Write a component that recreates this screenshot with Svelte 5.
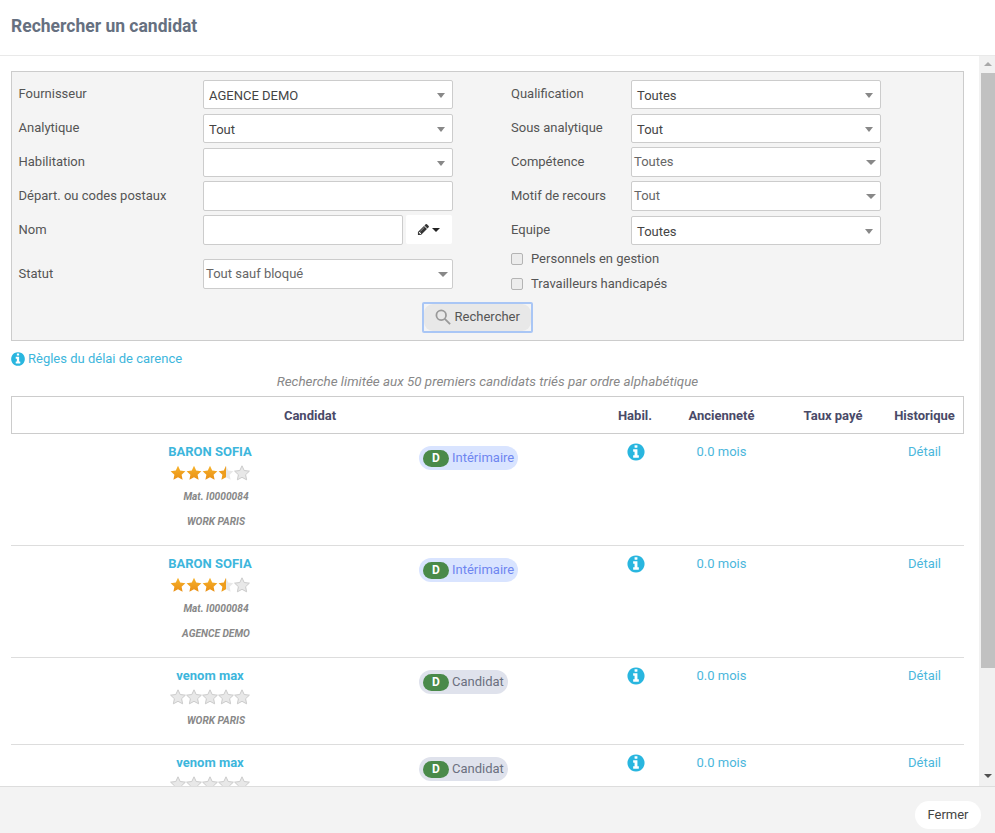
<script>
  const leftRows = [
    { label: 'Fournisseur', value: 'AGENCE DEMO', kind: 'a' },
    { label: 'Analytique', value: 'Tout', kind: 'a' },
    { label: 'Habilitation', value: '', kind: 'a' },
    { label: 'Départ. ou codes postaux', kind: 'input' },
    { label: 'Nom', kind: 'nom' },
    { label: 'Statut', value: 'Tout sauf bloqué', kind: 'b' }
  ];
  const rightRows = [
    { label: 'Qualification', value: 'Toutes', kind: 'a' },
    { label: 'Sous analytique', value: 'Tout', kind: 'a' },
    { label: 'Compétence', value: 'Toutes', kind: 'b' },
    { label: 'Motif de recours', value: 'Tout', kind: 'b' },
    { label: 'Equipe', value: 'Toutes', kind: 'a' }
  ];
  const candidates = [
    { name: 'BARON SOFIA', stars: 3.5, mat: 'Mat. I0000084', org: 'WORK PARIS', type: 'Intérimaire' },
    { name: 'BARON SOFIA', stars: 3.5, mat: 'Mat. I0000084', org: 'AGENCE DEMO', type: 'Intérimaire' },
    { name: 'venom max', stars: 0, org: 'WORK PARIS', type: 'Candidat' },
    { name: 'venom max', stars: 0, type: 'Candidat' }
  ];
  const starPath = 'M8 .8l2.2 4.7 5.2.65-3.8 3.55 1 5.1L8 12.3l-4.6 2.5 1-5.1L.6 6.15l5.2-.65z';
  const infoPath = 'M1152 1376v-160q0-14-9-23t-23-9h-96v-512q0-14-9-23t-23-9h-320q-14 0-23 9t-9 23v160q0 14 9 23t23 9h96v320h-96q-14 0-23 9t-9 23v160q0 14 9 23t23 9h448q14 0 23-9t9-23zm-128-896v-160q0-14-9-23t-23-9h-192q-14 0-23 9t-9 23v160q0 14 9 23t23 9h192q14 0 23-9t9-23zm640 416q0 209-103 385.5t-279.5 279.5-385.5 103-385.5-103-279.5-279.5-103-385.5 103-385.5 279.5-279.5 385.5-103 385.5 103 279.5 279.5 103 385.5z';
  const pencilPath = 'M491 1536l91-91-235-235-91 91v107h128v128h107zm523-928q0-22-22-22-10 0-17 7l-542 542q-7 7-7 17 0 22 22 22 10 0 17-7l542-542q7-7 7-17zm-54-192l416 416-832 832h-416v-416zm683 96q0 53-37 90l-166 166-416-416 166-165q36-38 90-38 53 0 91 38l235 234q37 39 37 91z';
  function starFill(i, n) {
    if (n >= i + 1) return 'url(#starFull)';
    if (n > i) return 'url(#starHalf)';
    return '#e8e8e8';
  }
  function starStroke(i, n) {
    return n >= i + 0.5 ? 'none' : '#cbcbcb';
  }
</script>

<svg class="defs" width="0" height="0" aria-hidden="true">
  <defs>
    <linearGradient id="starFull" x1="0" y1="0" x2="0" y2="1">
      <stop offset="0" stop-color="#f7b32b" />
      <stop offset="1" stop-color="#e98f14" />
    </linearGradient>
    <linearGradient id="starHalf" x1="0" y1="0" x2="1" y2="0">
      <stop offset="0.5" stop-color="#ee9d1c" />
      <stop offset="0.5" stop-color="#e8e8e8" />
    </linearGradient>
  </defs>
</svg>

{#snippet field(row)}
  <div class="label">{row.label}</div>
  {#if row.kind === 'input'}
    <div class="control input"></div>
  {:else if row.kind === 'nom'}
    <div class="nom">
      <div class="control input nom-input"></div>
      <div class="pencil-btn">
        <svg class="pencil" viewBox="0 0 1792 1792"><path d={pencilPath} /></svg>
        <span class="mini-caret"></span>
      </div>
    </div>
  {:else}
    <div class="control select {row.kind}">
      <span>{row.value}</span>
      <span class="caret"></span>
    </div>
  {/if}
{/snippet}

<div class="modal">
  <header class="head"><h1>Rechercher un candidat</h1></header>
  <div class="body">
    <div class="scroll">
      <section class="filters">
        <div class="cols">
          <div class="col left">
            {#each leftRows as row}
              <div class="row r-{row.kind}">{@render field(row)}</div>
            {/each}
          </div>
          <div class="col right">
            {#each rightRows as row}
              <div class="row r-{row.kind}">{@render field(row)}</div>
            {/each}
            <label class="check first"><span class="box"></span>Personnels en gestion</label>
            <label class="check"><span class="box"></span>Travailleurs handicapés</label>
          </div>
        </div>
        <div class="search-wrap">
          <button class="search">
            <span class="search-in">
              <svg class="loupe" viewBox="0 0 18 18"><circle cx="7" cy="7" r="5.4" /><path d="M11 11l6 6" /></svg>
              Rechercher
            </span>
          </button>
        </div>
      </section>

      <a class="rules" href="#rules">
        <svg class="info small" viewBox="0 0 1792 1792"><path d={infoPath} /></svg>
        Règles du délai de carence
      </a>
      <p class="note">Recherche limitée aux 50 premiers candidats triés par ordre alphabétique</p>

      <div class="table">
        <div class="thead grid">
          <div class="span2">Candidat</div>
          <div>Habil.</div>
          <div>Ancienneté</div>
          <div>Taux payé</div>
          <div>Historique</div>
        </div>
        {#each candidates as c}
          <div class="trow grid">
            <div class="who">
              <div class="name">{c.name}</div>
              <div class="stars">
                {#each [0, 1, 2, 3, 4] as i}
                  <svg viewBox="0 0 16 16"><path d={starPath} fill={starFill(i, c.stars)} stroke={starStroke(i, c.stars)} /></svg>
                {/each}
              </div>
              {#if c.mat}<div class="small-line">{c.mat}</div>{/if}
              {#if c.org}<div class="small-line">{c.org}</div>{/if}
            </div>
            <div class="badge-cell">
              <span class="badge" class:cand={c.type === 'Candidat'}><b>D</b><span class="badge-text">{c.type}</span></span>
            </div>
            <div class="center icon-cell"><svg class="info" viewBox="0 0 1792 1792"><path d={infoPath} /></svg></div>
            <div class="center link">0.0 mois</div>
            <div></div>
            <div class="center link">Détail</div>
          </div>
        {/each}
      </div>
    </div>
    <div class="scrollbar">
      <span class="arrow up"></span>
      <span class="thumb"></span>
      <span class="arrow down"></span>
    </div>
  </div>
  <footer class="foot"><button class="close">Fermer</button></footer>
</div>

<style>
  :global(body) {
    margin: 0;
    background: #fff;
  }
  .defs {
    position: absolute;
  }
  .modal {
    width: 995px;
    height: 833px;
    display: flex;
    flex-direction: column;
    font-family: Roboto, "Liberation Sans", sans-serif;
    font-size: 13px;
    color: #555;
    overflow: hidden;
  }
  .head {
    height: 55px;
    box-sizing: content-box;
    border-bottom: 1px solid #e9e9e9;
    display: flex;
    align-items: center;
    padding-left: 11px;
    flex: none;
  }
  h1 {
    margin: 0 0 3px;
    font-size: 17.5px;
    font-weight: 700;
    color: #667080;
  }
  .body {
    flex: none;
    height: 730px;
    display: flex;
  }
  .scroll {
    width: 979px;
    height: 730px;
    overflow: hidden;
    padding: 15px 15px 0 11px;
    box-sizing: border-box;
  }
  .scrollbar {
    width: 14px;
    margin-left: 2px;
    height: 730px;
    background: #f1f1f1;
    box-shadow: -2px 0 0 #f1f1f1;
    display: flex;
    flex-direction: column;
    align-items: center;
    position: relative;
    flex: none;
  }
  .thumb {
    width: 14px;
    height: 595px;
    background: #c1c1c1;
    margin-top: 2px;
  }
  .arrow {
    width: 0;
    height: 0;
    border-left: 4px solid transparent;
    border-right: 4px solid transparent;
  }
  .arrow.up {
    margin-top: 6px;
    border-bottom: 4px solid #a8a8a8;
    margin-bottom: 5px;
  }
  .arrow.down {
    margin-top: 106px;
    border-top: 4px solid #505050;
  }
  .filters {
    width: 953px;
    height: 270px;
    box-sizing: border-box;
    border: 1px solid #ccc;
    background: #f4f4f4;
    padding: 8px 0 0 6.5px;
  }
  .cols {
    display: flex;
    height: 222px;
  }
  .col.left {
    width: 492.5px;
  }
  .col {
    display: flex;
    flex-direction: column;
  }
  .row {
    display: flex;
    margin-bottom: 5px;
  }
  .left .r-input {
    margin-top: -1px;
  }
  .left .r-nom {
    margin-top: -1px;
    margin-bottom: 14px;
  }
  .right .r-b {
    margin-top: -1px;
  }
  .label {
    width: 184.5px;
    flex: none;
    color: #555;
    line-height: 27px;
    white-space: nowrap;
  }
  .r-input .label,
  .r-nom .label,
  .r-b .label {
    line-height: 29px;
  }
  .right .label {
    width: 120px;
  }
  .control {
    width: 250px;
    height: 29px;
    box-sizing: border-box;
    background: #fff;
    border: 1px solid #ccc;
    border-radius: 2px;
    flex: none;
  }
  .input,
  .r-b .control {
    height: 30px;
  }
  .select {
    display: flex;
    align-items: center;
    justify-content: space-between;
    padding: 2px 7px 0 5px;
    color: #444;
  }
  .select.b {
    padding: 0 4px 2px 2px;
    color: #666;
  }
  .select.b .caret {
    margin-top: 2px;
  }
  .caret {
    width: 0;
    height: 0;
    border-left: 4px solid transparent;
    border-right: 4px solid transparent;
    border-top: 5px solid #888;
  }
  .select.b .caret {
    border-left-width: 5px;
    border-right-width: 5px;
    border-top-width: 5px;
  }
  .nom {
    display: flex;
    width: 250px;
    gap: 3px;
  }
  .nom-input {
    width: 200px;
  }
  .pencil-btn {
    width: 46px;
    height: 29px;
    background: #fff;
    border-radius: 2px;
    display: flex;
    align-items: center;
    justify-content: center;
    gap: 2px;
    padding-right: 1px;
    box-sizing: border-box;
  }
  .pencil {
    width: 13px;
    height: 13px;
    fill: #333;
  }
  .mini-caret {
    width: 0;
    height: 0;
    border-left: 4px solid transparent;
    border-right: 4px solid transparent;
    border-top: 4px solid #222;
  }
  .check {
    display: flex;
    align-items: center;
    height: 25px;
    color: #555;
    margin-top: 0;
  }
  .check.first {
    margin-top: -4px;
  }
  .box {
    width: 10px;
    height: 10px;
    border: 1px solid #b4b4b4;
    border-radius: 2px;
    background: #ececec;
    margin-right: 8px;
  }
  .search-wrap {
    display: flex;
    justify-content: center;
    padding-right: 27px;
  }
  .search {
    width: 111px;
    height: 31px;
    background: transparent;
    border: 2px solid #a9c6f5;
    border-radius: 2px;
    font: inherit;
    color: #555;
    padding: 0;
    outline: none;
    display: flex;
  }
  .search-in {
    flex: 1;
    background: #e8e8e8;
    border-radius: 9px;
    display: flex;
    align-items: center;
    justify-content: center;
    gap: 4px;
    padding-bottom: 2px;
  }
  .loupe {
    width: 16px;
    height: 16px;
    fill: none;
    stroke: #999;
    stroke-width: 2;
  }
  .rules {
    display: flex;
    align-items: center;
    gap: 2px;
    margin-top: 9px;
    height: 17px;
    color: #3db6dc;
    text-decoration: none;
  }
  .info {
    width: 20px;
    height: 20px;
    fill: #29b6df;
  }
  .info.small {
    width: 16px;
    height: 16px;
    margin-left: -1px;
  }
  .note {
    margin: 6px 0 0;
    width: 953px;
    height: 17px;
    line-height: 17px;
    text-align: center;
    font-size: 13.4px;
    font-style: italic;
    color: #888;
  }
  .table {
    width: 953px;
    margin-top: 6px;
  }
  .grid {
    display: grid;
    grid-template-columns: 396px 200px 54px 119px 104px 79px;
  }
  .thead {
    height: 38px;
    box-sizing: border-box;
    border: 1px solid #ccc;
    font-weight: 700;
    color: #4a4a68;
    align-items: center;
    text-align: center;
  }
  .span2 {
    grid-column: span 2;
  }
  .trow {
    border-bottom: 1px solid #ddd;
    padding-left: 1px;
    padding-top: 9px;
    padding-bottom: 11px;
  }
  .who {
    text-align: center;
  }
  .name {
    font-weight: 700;
    color: #3db6dc;
    line-height: 17px;
    height: 17px;
  }
  .stars {
    display: flex;
    justify-content: center;
    margin-top: 5px;
    margin-bottom: 2px;
    height: 17px;
  }
  .stars svg {
    width: 16px;
    height: 16px;
    flex: none;
  }
  .small-line {
    height: 25px;
    line-height: 25px;
    padding-left: 12px;
    font-size: 10.2px;
    font-weight: 700;
    font-style: italic;
    color: #888;
  }
  .badge-cell {
    padding-left: 11px;
    padding-top: 3px;
  }
  .badge {
    display: inline-flex;
    align-items: center;
    height: 24px;
    border-radius: 12px;
    background: #d9e4ff;
    color: #6f86f0;
    padding: 0 4px;
    gap: 3px;
  }
  .badge-text {
    margin-top: -2px;
  }
  .badge.cand {
    background: #dfe2ec;
    color: #6b7080;
  }
  .badge b {
    width: 26px;
    height: 17px;
    border-radius: 9px;
    background: #4a8a4a;
    color: #fff;
    font-size: 12px;
    text-align: center;
    line-height: 17px;
  }
  .center {
    text-align: center;
    line-height: 17px;
  }
  .icon-cell {
    padding-left: 1px;
    margin-top: -1px;
  }
  .link {
    color: #4bb7dc;
  }
  .foot {
    height: 47px;
    box-sizing: border-box;
    flex: none;
    background: #f3f3f3;
    border-top: 1px solid #ddd;
    display: flex;
    justify-content: flex-end;
    padding: 14px 14px 0 0;
  }
  .close {
    width: 66px;
    height: 28px;
    background: #fff;
    border: 0;
    border-radius: 14px;
    font: inherit;
    color: #444;
    padding: 0 0 2px;
  }
</style>
